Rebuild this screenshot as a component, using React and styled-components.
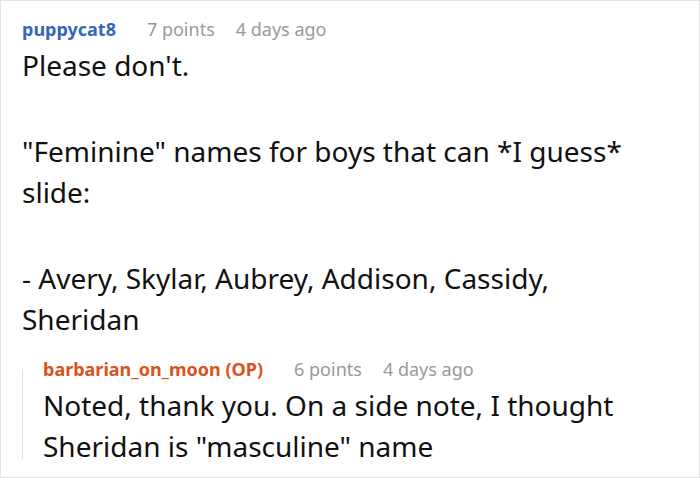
import React from "react";
import styled, { createGlobalStyle } from "styled-components";

const GlobalStyle = createGlobalStyle`
  html, body {
    margin: 0;
    padding: 0;
    background: #ffffff;
  }
  body {
    font-family: "Noto Sans", "Open Sans", sans-serif;
  }
`;

const comment = {
  author: "puppycat8",
  points: "7 points",
  age: "4 days ago",
  paragraphs: [
    ["Please don't."],
    ['"Feminine" names for boys that can *I guess*', "slide:"],
    ["- Avery, Skylar, Aubrey, Addison, Cassidy,", "Sheridan"],
  ],
  reply: {
    author: "barbarian_on_moon (OP)",
    points: "6 points",
    age: "4 days ago",
    paragraphs: [
      ["Noted, thank you. On a side note, I thought", 'Sheridan is "masculine" name'],
    ],
  },
};

function Text({ paragraphs }) {
  return (
    <Body>
      {paragraphs.map((lines, i) => (
        <Para key={i}>
          {lines.map((l, j) => (
            <Line key={j}>{l}</Line>
          ))}
        </Para>
      ))}
    </Body>
  );
}

export default function App() {
  const { reply } = comment;
  return (
    <>
      <GlobalStyle />
      <Frame>
        <Comment>
          <Meta>
            <Author>{comment.author}</Author>
            <Points>{comment.points}</Points>
            <Age>{comment.age}</Age>
          </Meta>
          <Text paragraphs={comment.paragraphs} />
          <Reply>
            <Meta>
              <Author $op>{reply.author}</Author>
              <Points>{reply.points}</Points>
              <Age>{reply.age}</Age>
            </Meta>
            <Text paragraphs={reply.paragraphs} />
          </Reply>
        </Comment>
      </Frame>
    </>
  );
}

const Frame = styled.div`
  box-sizing: border-box;
  width: 700px;
  height: 478px;
  border: 1px solid #e2e2e2;
  overflow: hidden;
  background: #fff;
`;

const Comment = styled.div`
  padding: 16px 0 0 21px;
`;

const Meta = styled.div`
  display: flex;
  align-items: baseline;
  font-size: 18px;
  line-height: 24px;
  white-space: nowrap;
`;

const Author = styled.span`
  font-weight: bold;
  color: ${(p) => (p.$op ? "#d95320" : "#3467b8")};
  margin-right: 31px;
`;

const Points = styled.span`
  color: #999999;
  margin-right: 21px;
`;

const Age = styled.span`
  color: #999999;
`;

const Body = styled.div`
  margin-top: 4px;
  color: #111111;
  font-size: 28px;
  line-height: 41.5px;
`;

const Para = styled.p`
  margin: 0 0 44px;
  &:last-child {
    margin-bottom: 0;
  }
`;

const Line = styled.span`
  display: block;
  white-space: nowrap;
`;

const Reply = styled.div`
  position: relative;
  margin-top: 16px;
  padding-left: 21px;
  &::before {
    content: "";
    position: absolute;
    left: 0;
    top: 12px;
    bottom: 9px;
    width: 1px;
    background: #dddddd;
  }
`;
